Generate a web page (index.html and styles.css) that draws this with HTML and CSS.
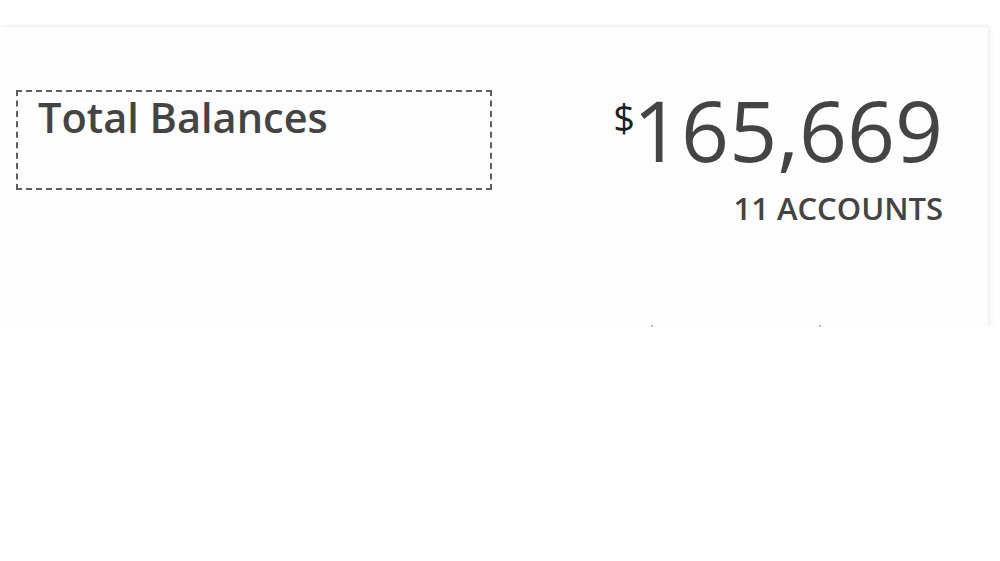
FILE: index.html
```html
<!DOCTYPE html>
<html lang="en">
<head>
    <meta charset="UTF-8">
    <meta name="viewport" content="width=device-width, initial-scale=1.0">
    <title>Total Balances</title>
    <link rel="stylesheet" href="styles.css">
</head>
<body>
    <div class="topbar"></div>

    <div class="card">
        <div class="title-box">
            <h1>Total Balances</h1>
        </div>
        <div class="summary">
            <div class="amount"><span class="currency">$</span>165,669</div>
            <div class="accounts">11 ACCOUNTS</div>
        </div>
        <!-- chart starts below, cut off -->
        <div class="ticks">
            <span></span>
            <span></span>
        </div>
    </div>
</body>
</html>
```

FILE: styles.css
```css
body {
    font-family: 'Open Sans', 'Noto Sans', sans-serif;
    margin: 0;
    background: #fff;
    color: #444;
    overflow: hidden;
}
.topbar {
    height: 27px;
    background: #fff;
}
.card {
    position: relative;
    width: 988px;
    height: 300px;
    box-sizing: border-box;
    padding: 63px 45px 0 16px;
    display: flex;
    justify-content: space-between;
    align-items: flex-start;
    background: #fdfdfd;
    box-shadow: 0 -1px 3px rgba(0, 0, 0, 0.06), 3px 0 5px rgba(0, 0, 0, 0.05);
}
.title-box {
    width: 476px;
    height: 100px;
    box-sizing: border-box;
    border: 2px dashed #5e5e5e;
    padding: 1px 0 0 20px;
}
h1 {
    margin: 0;
    font-size: 41.5px;
    font-weight: 600;
    line-height: 48px;
    color: #444;
}
.summary {
    display: flex;
    flex-direction: column;
    align-items: flex-end;
}
.amount {
    font-size: 84px;
    font-weight: 500;
    line-height: 79px;
    color: #444;
}
.currency {
    font-size: 38px;
    font-weight: 400;
    color: #1e1e1e;
    vertical-align: top;
    line-height: 54px;
    margin-right: -2px;
}
.accounts {
    font-size: 31px;
    font-weight: 600;
    line-height: 40px;
    margin-top: 19px;
    color: #444;
}
.ticks {
    position: absolute;
    left: 0;
    bottom: 0;
    width: 100%;
}
.ticks span {
    position: absolute;
    bottom: 0;
    width: 2px;
    height: 2px;
    background: #bbb;
}
.ticks span:first-child {
    left: 651px;
}
.ticks span:last-child {
    left: 819px;
}
```
